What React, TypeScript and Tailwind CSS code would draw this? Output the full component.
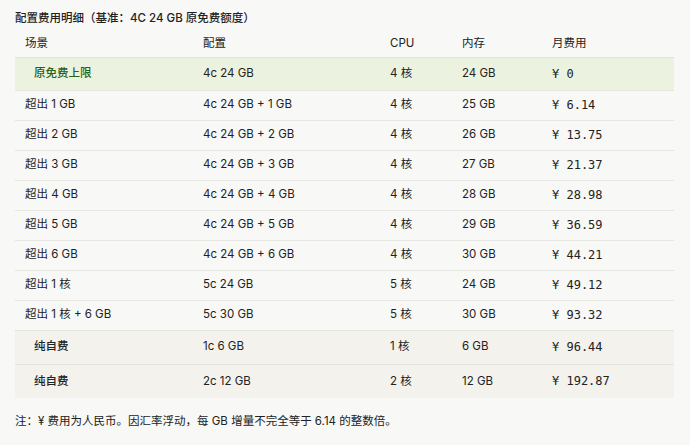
const rows = [
  { name: '原免费上限', cfg: '4c 24 GB', cpu: '4 核', mem: '24 GB', fee: '¥ 0', kind: 'free' },
  { name: '超出 1 GB', cfg: '4c 24 GB + 1 GB', cpu: '4 核', mem: '25 GB', fee: '¥ 6.14' },
  { name: '超出 2 GB', cfg: '4c 24 GB + 2 GB', cpu: '4 核', mem: '26 GB', fee: '¥ 13.75' },
  { name: '超出 3 GB', cfg: '4c 24 GB + 3 GB', cpu: '4 核', mem: '27 GB', fee: '¥ 21.37' },
  { name: '超出 4 GB', cfg: '4c 24 GB + 4 GB', cpu: '4 核', mem: '28 GB', fee: '¥ 28.98' },
  { name: '超出 5 GB', cfg: '4c 24 GB + 5 GB', cpu: '4 核', mem: '29 GB', fee: '¥ 36.59' },
  { name: '超出 6 GB', cfg: '4c 24 GB + 6 GB', cpu: '4 核', mem: '30 GB', fee: '¥ 44.21' },
  { name: '超出 1 核', cfg: '5c 24 GB', cpu: '5 核', mem: '24 GB', fee: '¥ 49.12' },
  { name: '超出 1 核 + 6 GB', cfg: '5c 30 GB', cpu: '5 核', mem: '30 GB', fee: '¥ 93.32' },
  { name: '纯自费', cfg: '1c 6 GB', cpu: '1 核', mem: '6 GB', fee: '¥ 96.44', kind: 'self' },
  { name: '纯自费', cfg: '2c 12 GB', cpu: '2 核', mem: '12 GB', fee: '¥ 192.87', kind: 'self' },
];

export default function App() {
  return (
    <div
      className="min-h-screen w-[690px] bg-[#f8f8f6] px-[15px] pt-[9px] text-[11.5px] text-[#222]"
      style={{ fontFamily: 'Inter, "Noto Sans CJK SC", sans-serif' }}
    >
      <h2 className="h-[19px] text-[11.5px] font-medium leading-[19px]">配置费用明细（基准：4C 24 GB 原免费额度）</h2>
      <table className="w-[659px] border-collapse">
        <thead>
          <tr className="h-[29px] text-left">
            <th className="w-[178px] pl-[10px] pt-[2px] font-normal">场景</th>
            <th className="w-[187px] pl-[10px] pt-[2px] font-normal">配置</th>
            <th className="w-[72px] pl-[10px] pt-[2px] font-normal">CPU</th>
            <th className="w-[90px] pl-[10px] pt-[2px] font-normal">内存</th>
            <th className="pl-[10px] pt-[2px] font-normal">月费用</th>
          </tr>
        </thead>
        <tbody>
          {rows.map((r, i) => {
            const rowCls =
              r.kind === 'free'
                ? 'h-[33px] bg-[#ebf2df] border-t border-[#dde6cf]'
                : r.kind === 'self'
                  ? 'h-[34px] bg-[#f3f2ec] border-t border-[#e4e3dc]'
                  : 'h-[30px] border-t border-[#e6e6e2]';
            const nameCls =
              r.kind === 'free'
                ? 'pl-[19px] text-[#276219] font-medium'
                : r.kind === 'self'
                  ? 'pl-[19px] font-medium'
                  : 'pl-[10px]';
            return (
              <tr key={i} className={rowCls}>
                <td className={nameCls}>{r.name}</td>
                <td className="pl-[10px]">{r.cfg}</td>
                <td className="pl-[10px]">{r.cpu}</td>
                <td className="pl-[10px]">{r.mem}</td>
                <td className="pl-[10px] font-['DejaVu_Sans_Mono',monospace] text-[12px]">{r.fee}</td>
              </tr>
            );
          })}
        </tbody>
      </table>
      <p className="mt-[15px] text-[11.5px] leading-[16px]">注：¥ 费用为人民币。因汇率浮动，每 GB 增量不完全等于 6.14 的整数倍。</p>
    </div>
  );
}
